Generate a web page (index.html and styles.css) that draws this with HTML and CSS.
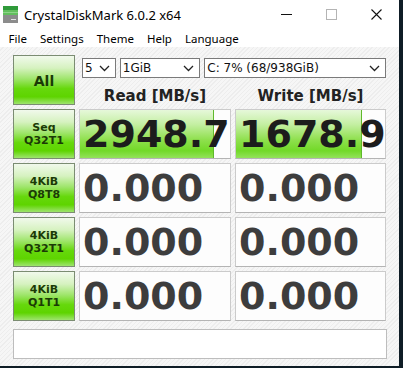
FILE: index.html
```html
<!DOCTYPE html>
<html lang="en">
<head>
  <meta charset="UTF-8">
  <title>CrystalDiskMark 6.0.2 x64</title>
  <link rel="stylesheet" href="styles.css">
</head>
<body>
  <div class="window">
    <div class="titlebar">
      <svg class="app-icon" width="15" height="17" viewBox="0 0 15 17">
        <rect x="0" y="0" width="15" height="4" fill="#2f9a3a"/>
        <rect x="0" y="4" width="15" height="5" fill="#63bf5e"/>
        <rect x="0" y="6" width="15" height="1" fill="#8fd48a"/>
        <rect x="0" y="9" width="15" height="8" fill="#8c8c8c"/>
        <rect x="8" y="13" width="5" height="1" fill="#e6e6e6"/>
      </svg>
      <span class="title">CrystalDiskMark 6.0.2 x64</span>
      <div class="controls">
        <span class="ctl">
          <svg width="11" height="11" viewBox="0 0 11 11"><line x1="0" y1="5.5" x2="11" y2="5.5" stroke="#111" stroke-width="1"/></svg>
        </span>
        <span class="ctl">
          <svg width="11" height="11" viewBox="0 0 11 11"><rect x="0.5" y="0.5" width="10" height="10" fill="none" stroke="#b4b4b4" stroke-width="1"/></svg>
        </span>
        <span class="ctl">
          <svg width="11" height="11" viewBox="0 0 11 11"><path d="M0.5 0.5 L10.5 10.5 M10.5 0.5 L0.5 10.5" stroke="#111" stroke-width="1.1"/></svg>
        </span>
      </div>
    </div>

    <div class="menubar">
      <span>File</span>
      <span>Settings</span>
      <span>Theme</span>
      <span>Help</span>
      <span>Language</span>
    </div>

    <div class="client">
      <div class="grid">
        <button class="test all">All</button>
        <div class="top-panel">
          <div class="selects">
            <div class="select count"><span>5</span><svg class="chev" width="11" height="7" viewBox="0 0 11 7"><polyline points="1,1 5.5,5.5 10,1" fill="none" stroke="#222" stroke-width="1.3"/></svg></div>
            <div class="select size"><span>1GiB</span><svg class="chev" width="11" height="7" viewBox="0 0 11 7"><polyline points="1,1 5.5,5.5 10,1" fill="none" stroke="#222" stroke-width="1.3"/></svg></div>
            <div class="select drive"><span>C: 7% (68/938GiB)</span><svg class="chev" width="11" height="7" viewBox="0 0 11 7"><polyline points="1,1 5.5,5.5 10,1" fill="none" stroke="#222" stroke-width="1.3"/></svg></div>
          </div>
          <div class="headers">
            <div>Read [MB/s]</div>
            <div>Write [MB/s]</div>
          </div>
        </div>

        <button class="test">Seq<br>Q32T1</button>
        <div class="cell"><div class="bar" style="width:88.7%"></div><span class="value">2948.7</span></div>
        <div class="cell"><div class="bar" style="width:84%"></div><span class="value">1678.9</span></div>

        <button class="test">4KiB<br>Q8T8</button>
        <div class="cell"><span class="value zero">0.000</span></div>
        <div class="cell"><span class="value zero">0.000</span></div>

        <button class="test">4KiB<br>Q32T1</button>
        <div class="cell"><span class="value zero">0.000</span></div>
        <div class="cell"><span class="value zero">0.000</span></div>

        <button class="test">4KiB<br>Q1T1</button>
        <div class="cell"><span class="value zero">0.000</span></div>
        <div class="cell"><span class="value zero">0.000</span></div>
      </div>
      <div class="comment"></div>
    </div>
  </div>
</body>
</html>
```

FILE: styles.css
```css
body {
  margin: 0;
  background: #0f1d26;
  font-family: "DejaVu Sans", sans-serif;
}
.window {
  width: 399px;
  height: 366px;
  background: #fff;
  display: flex;
  flex-direction: column;
  overflow: hidden;
}
.titlebar {
  height: 29px;
  display: flex;
  align-items: center;
  background: #fff;
}
.app-icon {
  margin: 0 6px 0 3px;
}
.title {
  font-family: "Noto Sans", sans-serif;
  font-size: 13px;
  color: #000;
  flex: 1;
}
.controls {
  display: flex;
}
.ctl {
  width: 45px;
  height: 29px;
  display: flex;
  align-items: center;
  justify-content: center;
}
.menubar {
  height: 18px;
  display: flex;
  align-items: center;
  padding-left: 2px;
  font-family: "Noto Sans", sans-serif;
  font-size: 11.5px;
  color: #000;
}
.menubar span {
  padding: 0 6.5px;
}
.client {
  flex: 1;
  padding: 8px 0 0 13px;
  background: repeating-linear-gradient(135deg, #f6f6f6 0, #f6f6f6 2px, #ededed 2px, #ededed 3px);
}
.grid {
  display: grid;
  grid-template-columns: 62px 152px 151px;
  grid-auto-rows: 50px;
  column-gap: 4px;
  row-gap: 4px;
}
.test {
  margin: 0;
  padding: 0;
  border: 1px solid #7b8c72;
  background: linear-gradient(to bottom, #f1f9ec 0%, #d6f2c0 25%, #9ee56a 48%, #66d80c 68%, #5ed400 85%, #9ee46e 100%);
  font-family: "DejaVu Sans", sans-serif;
  font-weight: bold;
  font-size: 11px;
  line-height: 13px;
  color: #1b3a06;
  text-align: center;
}
.test.all {
  font-size: 14px;
  padding-top: 2px;
}
.top-panel {
  grid-column: 2 / 4;
}
.selects {
  display: flex;
  gap: 4px;
  margin: 3px 0 0 3px;
}
.select {
  height: 20px;
  box-sizing: border-box;
  border: 1px solid #7a7a7a;
  background: #fff;
  display: flex;
  align-items: center;
  justify-content: space-between;
  padding: 0 5px 0 2px;
  font-size: 12px;
  color: #111;
}
.select.count { width: 34px; }
.select.size { width: 81px; }
.select.drive { width: 183px; }
.headers {
  display: grid;
  grid-template-columns: 152px 151px;
  column-gap: 4px;
  margin-top: 9px;
  font-weight: bold;
  font-size: 15px;
  line-height: 18px;
  color: #222;
  text-align: center;
}
.cell {
  position: relative;
  overflow: hidden;
  border: 1px solid #cbcbcb;
  border-bottom-color: #b4b4b4;
  background: #fdfdfd;
}
.bar {
  position: absolute;
  left: 0;
  top: 0;
  bottom: 0;
  border-right: 1px solid #5fb82c;
  background: linear-gradient(to bottom, #e6f8da 0%, #c4efa2 30%, #8fe04e 62%, #72d928 85%, #93e25a 100%);
}
.value {
  position: relative;
  display: block;
  padding-left: 3px;
  font-weight: bold;
  font-size: 38px;
  line-height: 48px;
  white-space: nowrap;
  color: #1c1c1c;
}
.value.zero {
  color: #3d3d3d;
}
.comment {
  margin-top: 8px;
  width: 374px;
  height: 30px;
  box-sizing: border-box;
  border: 1px solid #bdbdbd;
  background: #fff;
}
```
